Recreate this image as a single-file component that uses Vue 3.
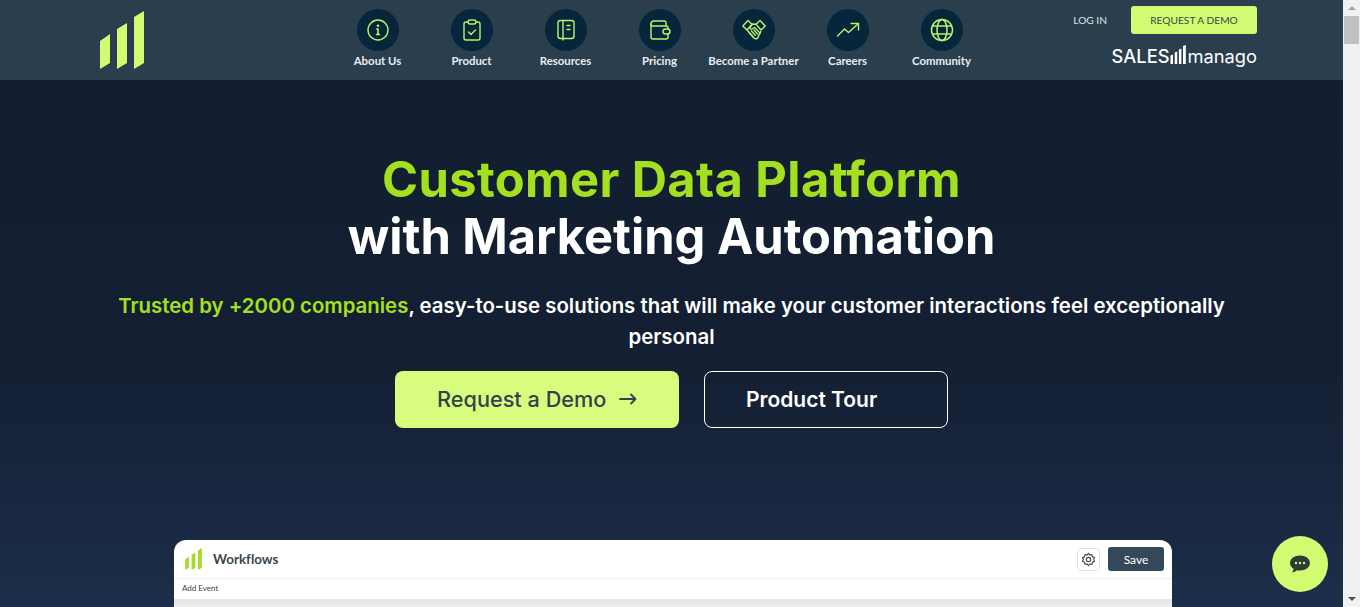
<script setup>
const items = [
  { label: 'About Us', icon: 'info' },
  { label: 'Product', icon: 'clip' },
  { label: 'Resources', icon: 'book' },
  { label: 'Pricing', icon: 'wallet' },
  { label: 'Become a Partner', icon: 'hands' },
  { label: 'Careers', icon: 'trend' },
  { label: 'Community', icon: 'globe' },
]
const bars = 'M0 30 10 23V52L0 58Z M17 18 27 12V52L17 58Z M34 6 44 0V52L34 58Z'
</script>

<template>
  <div class="window">
    <div class="page">
      <header class="header">
        <svg class="logo" viewBox="0 0 44 58" width="44" height="58">
          <path :d="bars" fill="#d3fb71" />
        </svg>
        <nav class="nav">
          <a v-for="it in items" :key="it.label" class="nav-item">
            <span class="circle">
              <svg viewBox="0 0 24 24" width="24" height="24" fill="none" stroke="#bdf26a" stroke-width="1.4" stroke-linecap="round" stroke-linejoin="round">
                <template v-if="it.icon === 'info'">
                  <circle cx="12" cy="12" r="10" />
                  <path d="M12 11v5.500M10.600 16.500h2.800M10.800 11H12" stroke-width="1.600" />
                  <circle cx="12" cy="7.800" r=".6" />
                </template>
                <template v-else-if="it.icon === 'clip'">
                  <path d="M8 4H6a2 2 0 0 0-2 2v14a2 2 0 0 0 2 2h12a2 2 0 0 0 2-2V6a2 2 0 0 0-2-2h-2" />
                  <rect x="8" y="2" width="8" height="4" rx="2" />
                  <path d="M8.500 14l2.500 2.500 4.500-4.500" />
                </template>
                <template v-else-if="it.icon === 'book'">
                  <rect x="4" y="2.500" width="16" height="18" rx="2.500" />
                  <path d="M9 2.500V22M13 7.500h3M13 11.500h3" />
                </template>
                <template v-else-if="it.icon === 'wallet'">
                  <path d="M18 8V5a2 2 0 0 0-2-2H6a3 3 0 0 0-3 3v13a2 2 0 0 0 2 2h13a2 2 0 0 0 2-2v-3" />
                  <path d="M3 6a2 2 0 0 0 2 2h13a2 2 0 0 1 2 2v1" />
                  <rect x="15" y="11" width="7" height="5" rx="2.500" />
                </template>
                <template v-else-if="it.icon === 'hands'">
                  <path d="M.8 8 6 2.500l4 3.700L5 12Z M23.200 8 18 2.500l-4 3.700L19 12Z" />
                  <path d="M5.500 12.500 12 20c1.200 1.200 2.800 1 3.800-.2l3-6.300" />
                  <path d="M14 6.200 10.500 6 8 9.500c-.6 1.200 1 2.300 2.300 1.500l2.200-1.500 5.500 5.500" />
                  <path d="M7.500 15l3.500 3.800M9.500 13l3.800 4.300M12 12l3.700 4.200" />
                </template>
                <template v-else-if="it.icon === 'trend'">
                  <path d="M1.500 18 8.500 11l4 3.500L22 6" />
                  <path d="M15 5.500h7.500V12" />
                </template>
                <template v-else>
                  <circle cx="12" cy="12" r="10.500" stroke-width="1.500" />
                  <ellipse cx="12" cy="12" rx="5" ry="10.500" stroke-width="1.500" />
                  <path d="M2.800 8h18.400M2.800 16h18.400" stroke-width="1.500" />
                </template>
              </svg>
            </span>
            <span class="label">{{ it.label }}</span>
          </a>
        </nav>
        <div class="side">
          <div class="side-top">
            <a class="login">LOG IN</a>
            <a class="mini-demo">REQUEST A DEMO</a>
          </div>
          <div class="brand">
            <span>SALES</span>
            <svg viewBox="0 0 16 20" width="16" height="20">
              <path d="M.5 10.500 3 9.500V19H.5Z M4.700 7.500 7.200 6.500V19H4.700Z M8.900 4.500 11.400 3.500V19H8.900Z M13 1 15.800 0V19H13Z" fill="#fff" />
            </svg>
            <span class="brand-light">manago</span>
          </div>
        </div>
      </header>

      <main class="hero">
        <h1 class="title">
          <span class="lime title-lime">Customer Data Platform</span><br />with Marketing Automation
        </h1>
        <p class="sub">
          <span class="lime">Trusted by +2000 companies</span>, easy-to-use solutions that will make your customer interactions feel exceptionally personal
        </p>
        <div class="cta">
          <a class="btn primary">Request a Demo
            <svg viewBox="0 0 18 12" width="18" height="12" fill="none" stroke="#33434c" stroke-width="1.800" stroke-linecap="round" stroke-linejoin="round"><path d="M1 6h15.500M12 1.500 16.500 6 12 10.500" /></svg>
          </a>
          <a class="btn ghost">Product Tour</a>
        </div>
        <section class="card">
          <div class="card-head">
            <svg viewBox="0 0 44 58" width="17" height="22">
              <path :d="bars" fill="#a7d92c" />
            </svg>
            <span class="card-title">Workflows</span>
            <span class="gear">
              <svg viewBox="0 0 24 24" width="15" height="15" fill="none" stroke="#39464f" stroke-width="1.800" stroke-linejoin="round">
                <circle cx="12" cy="12" r="3.500" />
                <path d="M12 2l2 2.800 3.400-.6 1 3.300 3.100 1.500L20.200 12l1.300 3-3.100 1.500-1 3.300-3.400-.6L12 22l-2-2.800-3.400.6-1-3.300L2.500 15l1.300-3-1.300-3 3.100-1.500 1-3.300 3.400.6Z" />
              </svg>
            </span>
            <span class="save">Save</span>
          </div>
          <div class="card-sub">Add Event</div>
          <div class="card-body"></div>
        </section>
      </main>
    </div>

    <aside class="scrollbar">
      <span class="arrow up"></span>
      <span class="thumb"></span>
      <span class="arrow down"></span>
    </aside>

    <button class="chat">
      <svg viewBox="0 0 24 24" width="24" height="24">
        <path d="M12 3.500c5.500 0 10 3 10 7.500s-4.500 7.500-10 7.500c-1 0-2-.1-3-.3-1.300 1.300-3 2-5 2.100 1-1 1.500-2.200 1.500-3.500C3.500 15.400 2 13.400 2 11c0-4.500 4.500-7.500 10-7.500Z" fill="#2e3b37" />
        <circle cx="8" cy="11" r="1.200" fill="#d3fb71" />
        <circle cx="12" cy="11" r="1.200" fill="#d3fb71" />
        <circle cx="16" cy="11" r="1.200" fill="#d3fb71" />
      </svg>
    </button>
  </div>
</template>

<style>
html, body { margin: 0; height: 100%; overflow: hidden; }
</style>

<style scoped>
.window {
  display: flex;
  height: 607px;
  overflow: hidden;
  font-family: Lato, "Noto Sans", sans-serif;
  font-variant-ligatures: none;
}
.page {
  width: 1343px;
  flex: none;
  display: flex;
  flex-direction: column;
  background: linear-gradient(180deg, #131d2f 0%, #141f33 60%, #1c2e4a 100%);
}
.header {
  height: 80px;
  flex: none;
  box-sizing: border-box;
  padding: 11px 86px 0 100px;
  display: flex;
  align-items: flex-start;
  background: #2a3e4e;
}
.logo { flex: none; }
.nav {
  display: flex;
  margin-left: 187px;
  margin-top: -2px;
}
.nav-item {
  width: 94px;
  display: flex;
  flex-direction: column;
  align-items: center;
  color: #e7edf1;
}
.circle {
  width: 42px;
  height: 42px;
  border-radius: 50%;
  background: #06263b;
  display: flex;
  align-items: center;
  justify-content: center;
}
.label {
  margin-top: 3px;
  margin-right: 1px;
  font-size: 11.400px;
  line-height: 14px;
  font-weight: 700;
  white-space: nowrap;
}
.side {
  margin-left: auto;
  margin-top: -5px;
  display: flex;
  flex-direction: column;
  align-items: flex-end;
}
.side-top {
  display: flex;
  align-items: center;
  gap: 24px;
}
.login {
  font-size: 10.200px;
  color: #dfe6ea;
}
.mini-demo {
  width: 126px;
  height: 28px;
  border-radius: 3px;
  background: #d3fb71;
  color: #3a4a48;
  font-size: 10.200px;
  display: flex;
  align-items: center;
  justify-content: center;
}
.brand {
  margin-top: 11px;
  display: flex;
  align-items: center;
  color: #fff;
  font-family: Inter, sans-serif;
  font-size: 18.300px;
  font-weight: 500;
  line-height: 22px;
}
.brand svg { margin: -2px 0 0 1px; }
.brand-light { font-weight: 400; margin-left: 1px; }
.hero {
  flex: 1;
  min-height: 0;
  display: flex;
  flex-direction: column;
  align-items: center;
  overflow: hidden;
}
.title {
  margin: 71px 0 0;
  font-family: Inter, sans-serif;
  font-size: 48.800px;
  line-height: 57px;
  font-weight: 700;
  text-align: center;
  color: #fff;
}
.lime { color: #a4e01f; }
.title-lime { letter-spacing: .4px; }
.sub {
  margin: 25px 0 0;
  width: 1115px;
  font-family: Inter, sans-serif;
  font-size: 20.400px;
  line-height: 31px;
  font-weight: 600;
  text-align: center;
  color: #fff;
}
.cta {
  display: flex;
  gap: 25px;
  margin-top: 19px;
}
.btn {
  height: 57px;
  box-sizing: border-box;
  border-radius: 8px;
  display: flex;
  align-items: center;
  font-family: Inter, sans-serif;
  font-size: 21.700px;
  font-weight: 500;
}
.primary {
  width: 284px;
  padding-left: 42px;
  padding-bottom: 1px;
  gap: 13px;
  background: #d9fc7e;
  color: #33434c;
}
.ghost {
  width: 244px;
  padding-left: 41px;
  border: 1px solid #fff;
  color: #fff;
  font-size: 21px;
  font-weight: 600;
}
.card {
  margin-top: 112px;
  margin-left: 3px;
  width: 998px;
  flex: none;
  background: #fff;
  border-radius: 12px 12px 0 0;
  overflow: hidden;
}
.card-head {
  height: 39px;
  box-sizing: border-box;
  padding: 0 8px 0 11px;
  display: flex;
  align-items: center;
  border-bottom: 1px solid #eef0f1;
}
.card-title {
  margin-left: 11px;
  font-size: 13.400px;
  font-weight: 700;
  color: #39464f;
}
.gear {
  margin-left: auto;
  width: 23px;
  height: 23px;
  box-sizing: border-box;
  border: 1px solid #dfe2e4;
  border-radius: 4px;
  display: flex;
  align-items: center;
  justify-content: center;
}
.save {
  margin-left: 8px;
  width: 56px;
  height: 24px;
  border-radius: 3px;
  background: #33485a;
  color: #fff;
  font-size: 12px;
  display: flex;
  align-items: center;
  justify-content: center;
}
.card-sub {
  height: 20px;
  padding-left: 8px;
  font-size: 8px;
  line-height: 19px;
  color: #39464f;
}
.card-body {
  height: 8px;
  background: linear-gradient(180deg, #e4e5e6, #efefef);
}
.scrollbar {
  width: 17px;
  flex: none;
  background: #f1f1f1;
  display: flex;
  flex-direction: column;
  align-items: center;
  padding-top: 6px;
  box-sizing: border-box;
}
.arrow {
  width: 0;
  height: 0;
  border-left: 4px solid transparent;
  border-right: 4px solid transparent;
}
.up { border-bottom: 4px solid #a3a3a3; }
.down { border-top: 4px solid #505050; margin-top: auto; margin-bottom: 6px; }
.thumb {
  width: 15px;
  height: 28px;
  margin-top: 6px;
  background: #c1c1c1;
}
.chat {
  position: fixed;
  left: 1272px;
  top: 536px;
  width: 56px;
  height: 56px;
  border: 0;
  padding: 0;
  border-radius: 50%;
  background: #d3fb71;
  display: flex;
  align-items: center;
  justify-content: center;
}
</style>
